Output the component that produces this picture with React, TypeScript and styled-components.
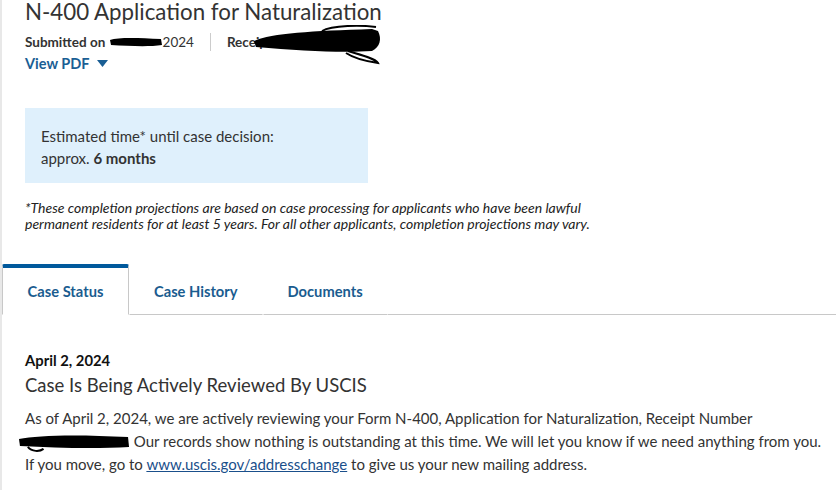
import React from 'react'
import styled, { createGlobalStyle } from 'styled-components'

const GlobalStyle = createGlobalStyle`
  body {
    margin: 0;
    background: #ffffff;
    font-family: Lato, "Noto Sans", sans-serif;
    color: #333333;
  }
`

const Page = styled.div`
  min-height: 490px;
  border-left: 2px solid #e8e8e8;
  box-sizing: border-box;
  overflow: hidden;
`

const Header = styled.div`
  padding: 0 0 0 23px;
`

const Title = styled.h1`
  margin: -2px 0 0 0;
  font-size: 22.3px;
  line-height: 28px;
  font-weight: 400;
  color: #333333;
`

const MetaRow = styled.div`
  display: flex;
  align-items: center;
  margin-top: 7px;
  height: 18px;
  font-size: 13.5px;
  font-weight: 700;
  color: #333333;
`

const MetaItem = styled.span`
  display: flex;
  align-items: center;
  white-space: nowrap;
`

const MetaValue = styled.span`
  font-weight: 400;
`

const Divider = styled.span`
  width: 1px;
  height: 18px;
  background: #cccccc;
  margin: 0 16px 0 16px;
`

const Redaction = styled.svg`
  display: inline-block;
  vertical-align: middle;
  flex-shrink: 0;
`

const ViewPdf = styled.button`
  display: flex;
  align-items: center;
  gap: 8px;
  margin-top: 4px;
  padding: 0;
  border: none;
  background: none;
  font-family: inherit;
  font-size: 14.5px;
  font-weight: 700;
  color: #1a5e94;
  cursor: pointer;
`

const InfoBox = styled.div`
  width: 343px;
  height: 75px;
  box-sizing: border-box;
  margin-top: 36px;
  padding: 17px 16px;
  background: #dff0fc;
  font-size: 15px;
  line-height: 22px;
  color: #333333;
`

const Footnote = styled.p`
  margin: 17px 0 0 0;
  font-size: 14px;
  line-height: 16px;
  font-style: italic;
  color: #222222;
`

const TabBar = styled.div`
  display: flex;
  margin-top: 32px;
  border-bottom: 1px solid #c8c8c8;
  height: 50px;
`

const Tab = styled.div<{ $active?: boolean }>`
  display: flex;
  align-items: center;
  justify-content: center;
  box-sizing: border-box;
  height: 51px;
  padding: ${p => (p.$active ? '0' : '0 24px')};
  width: ${p => (p.$active ? '127px' : 'auto')};
  font-size: 14.7px;
  font-weight: 700;
  color: #1a5c8f;
  background: #ffffff;
  border-top: 4px solid ${p => (p.$active ? '#00599c' : 'transparent')};
  border-left: 1px solid ${p => (p.$active ? '#c8c8c8' : 'transparent')};
  border-right: 1px solid ${p => (p.$active ? '#c8c8c8' : 'transparent')};
  border-bottom: 1px solid ${p => (p.$active ? '#ffffff' : '#c8c8c8')};
  border-radius: ${p => (p.$active ? '2px 2px 0 0' : '0')};
`

const Content = styled.div`
  padding: 35px 0 0 23px;
`

const StatusDate = styled.div`
  font-size: 14.8px;
  font-weight: 700;
  line-height: 20px;
  color: #111111;
`

const StatusTitle = styled.h2`
  margin: 3px 0 0 0;
  font-size: 18.5px;
  line-height: 24px;
  font-weight: 400;
  color: #333333;
`

const Body = styled.p`
  margin: 10px 0 0 0;
  font-size: 15px;
  line-height: 23px;
  color: #333333;
  white-space: nowrap;
`

const Link = styled.a`
  color: #1a4f8b;
  text-decoration: underline;
`

function Caret() {
  return (
    <svg width="11" height="7" viewBox="0 0 11 7">
      <path d="M0 0 H11 L5.5 7 Z" fill="#1a5e94" />
    </svg>
  )
}

function App() {
  return (
    <>
      <GlobalStyle />
      <Page>
        <Header>
          <Title>N-400 Application for Naturalization</Title>
          <MetaRow>
            <MetaItem>
              Submitted on&nbsp;
              <Redaction width="54" height="12" viewBox="0 0 54 12">
                <path d="M1 4 C10 1, 30 2, 52 3 L53 9 C40 11, 20 10, 2 9 Z" fill="#000" />
              </Redaction>
              <MetaValue>2024</MetaValue>
            </MetaItem>
            <Divider />
            <MetaItem>
              Receipt
              <Redaction width="140" height="40" viewBox="0 0 140 40" style={{ marginLeft: -20, marginTop: 6 }}>
                <path d="M2 16 C20 8, 60 6, 120 4 L126 6 C130 14, 128 22, 120 26 C90 28, 50 26, 4 22 Z" fill="#000" />
                <path d="M70 6 C80 0, 110 0, 124 2" stroke="#000" strokeWidth="2" fill="none" />
                <path d="M96 26 C110 30, 124 34, 126 38 C112 36, 100 32, 94 28" stroke="#000" strokeWidth="2" fill="none" />
              </Redaction>
            </MetaItem>
          </MetaRow>
          <ViewPdf>
            View PDF <Caret />
          </ViewPdf>
          <InfoBox>
            Estimated time* until case decision:
            <br />
            approx. <b>6 months</b>
          </InfoBox>
          <Footnote>
            *These completion projections are based on case processing for applicants who have been lawful
            <br />
            permanent residents for at least 5 years. For all other applicants, completion projections may vary.
          </Footnote>
        </Header>
        <TabBar>
          <Tab $active>Case Status</Tab>
          <Tab>Case History</Tab>
          <Tab>Documents</Tab>
        </TabBar>
        <Content>
          <StatusDate>April 2, 2024</StatusDate>
          <StatusTitle>Case Is Being Actively Reviewed By USCIS</StatusTitle>
          <Body>
            As of April 2, 2024, we are actively reviewing your Form N-400, Application for Naturalization, Receipt Number
            <br />
            <Redaction width="112" height="20" viewBox="0 0 114 20" style={{ marginLeft: -7 }}>
              <path d="M1 6 C20 2, 60 1, 112 4 L113 14 C80 16, 40 15, 2 13 Z" fill="#000" />
              <path d="M10 14 C14 19, 22 19, 26 16" stroke="#000" strokeWidth="2" fill="none" />
            </Redaction>{' '}
            Our records show nothing is outstanding at this time. We will let you know if we need anything from you.
            <br />
            If you move, go to <Link href="#">www.uscis.gov/addresschange</Link> to give us your new mailing address.
          </Body>
        </Content>
      </Page>
    </>
  )
}

export default App
